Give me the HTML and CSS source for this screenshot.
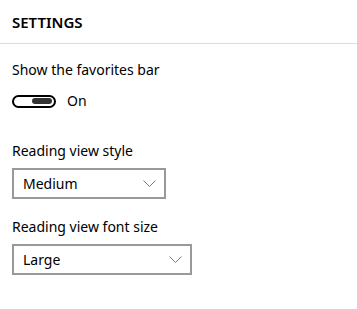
FILE: index.html
```html
<!DOCTYPE html>
<html lang="en">

<head>
    <meta charset="UTF-8">
    <meta name="viewport" content="width=device-width, initial-scale=1.0">
    <title>Settings</title>
    <link rel="stylesheet" href="styles.css">
</head>

<body>
    <div class="panel">
        <div class="header">SETTINGS</div>
        <div class="content">
            <div class="group favGroup">
                <div class="label">Show the favorites bar</div>
                <div class="toggleRow">
                    <div class="toggle">
                        <div class="knob"></div>
                    </div>
                    <span class="toggleText">On</span>
                </div>
            </div>

            <div class="group styleGroup">
                <div class="label">Reading view style</div>
                <div class="select styleSelect">
                    <span>Medium</span>
                    <svg class="chevron" width="13" height="7" viewBox="0 0 13 7">
                        <path d="M0.5 0.5 L6.5 6.5 L12.5 0.5" fill="none" stroke="#7a7a7a" stroke-width="1" />
                    </svg>
                </div>
            </div>

            <div class="group sizeGroup">
                <div class="label">Reading view font size</div>
                <div class="select sizeSelect">
                    <span>Large</span>
                    <svg class="chevron" width="13" height="7" viewBox="0 0 13 7">
                        <path d="M0.5 0.5 L6.5 6.5 L12.5 0.5" fill="none" stroke="#7a7a7a" stroke-width="1" />
                    </svg>
                </div>
            </div>
        </div>
    </div>
</body>

</html>
```

FILE: styles.css
```css
* {
    box-sizing: border-box;
}

body {
    margin: 0;
    padding: 0;
    background-color: #fff;
    color: #000;
    font-family: "Noto Sans", "Open Sans", sans-serif;
    font-size: 14px;
}

.panel {
    width: 100%;
}

.header {
    height: 44px;
    padding: 12px 12px 0;
    font-size: 15px;
    font-weight: 600;
    line-height: 20px;
    border-bottom: 1px solid #dcdcdc;
}

.content {
    padding: 0 12px;
}

.favGroup {
    margin-top: 16px;
}

.styleGroup {
    margin-top: 30px;
}

.sizeGroup {
    margin-top: 18px;
}

.label {
    line-height: 20px;
    height: 20px;
}

/* 開關 */
.toggleRow {
    display: flex;
    align-items: center;
    gap: 11px;
    margin-top: 11px;
    height: 20px;
    line-height: 20px;
}

.toggle {
    width: 44px;
    height: 13px;
    border: 2px solid #000;
    border-radius: 7px;
    display: flex;
    justify-content: flex-end;
    align-items: center;
    padding-right: 2px;
}

.knob {
    width: 20px;
    height: 6px;
    border-radius: 3px;
    background-color: #333;
}

/* 下拉選單 */
.select {
    margin-top: 7px;
    height: 31px;
    border: 2px solid #999;
    display: flex;
    justify-content: space-between;
    align-items: center;
    padding: 0 8px 0 9px;
}

.styleSelect {
    width: 154px;
}

.sizeSelect {
    width: 180px;
}

.chevron {
    display: block;
}
```
